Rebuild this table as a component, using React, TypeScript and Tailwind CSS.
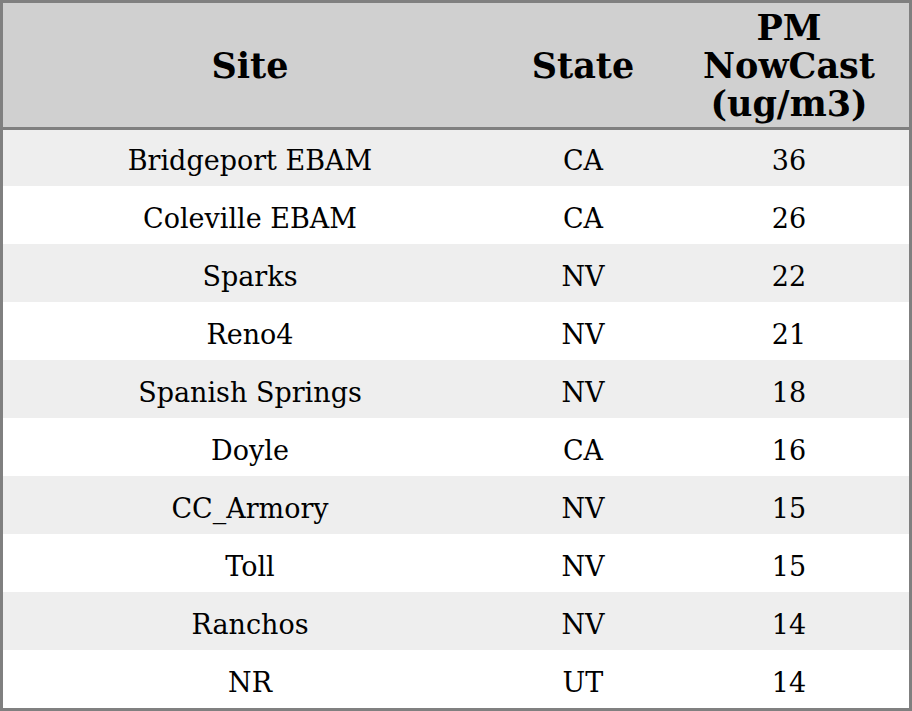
const rows = [
  { site: "Bridgeport EBAM", state: "CA", pm: 36 },
  { site: "Coleville EBAM", state: "CA", pm: 26 },
  { site: "Sparks", state: "NV", pm: 22 },
  { site: "Reno4", state: "NV", pm: 21 },
  { site: "Spanish Springs", state: "NV", pm: 18 },
  { site: "Doyle", state: "CA", pm: 16 },
  { site: "CC_Armory", state: "NV", pm: 15 },
  { site: "Toll", state: "NV", pm: 15 },
  { site: "Ranchos", state: "NV", pm: 14 },
  { site: "NR", state: "UT", pm: 14 },
];

export default function App() {
  return (
    <div className="w-[912px] h-[711px] bg-white font-['DejaVu_Serif',serif] text-black">
      <div className="border-[3px] border-[#808080]">
        <table className="w-full h-[705px] table-fixed border-collapse">
          <colgroup>
            <col className="w-[494px]" />
            <col className="w-[172px]" />
            <col />
          </colgroup>
          <thead>
            <tr className="h-[125px] bg-[#d0d0d0] text-[35px] leading-[38px] font-bold">
              <th className="text-center align-middle pt-[2px]">Site</th>
              <th className="text-center align-middle pt-[2px]">State</th>
              <th className="text-center align-middle pt-[2px]">
                PM
                <br />
                NowCast
                <br />
                (ug/m3)
              </th>
            </tr>
          </thead>
          <tbody className="border-t-[3px] border-[#808080] text-[27px] leading-[32px]">
            {rows.map((r, i) => (
              <tr
                key={i}
                className={`h-[57.7px] ${i % 2 === 0 ? "bg-[#eeeeee]" : "bg-white"}`}
              >
                <td className="text-center align-middle pt-[7px]">{r.site}</td>
                <td className="text-center align-middle pt-[7px]">{r.state}</td>
                <td className="text-center align-middle pt-[7px]">{r.pm}</td>
              </tr>
            ))}
          </tbody>
        </table>
      </div>
    </div>
  );
}
